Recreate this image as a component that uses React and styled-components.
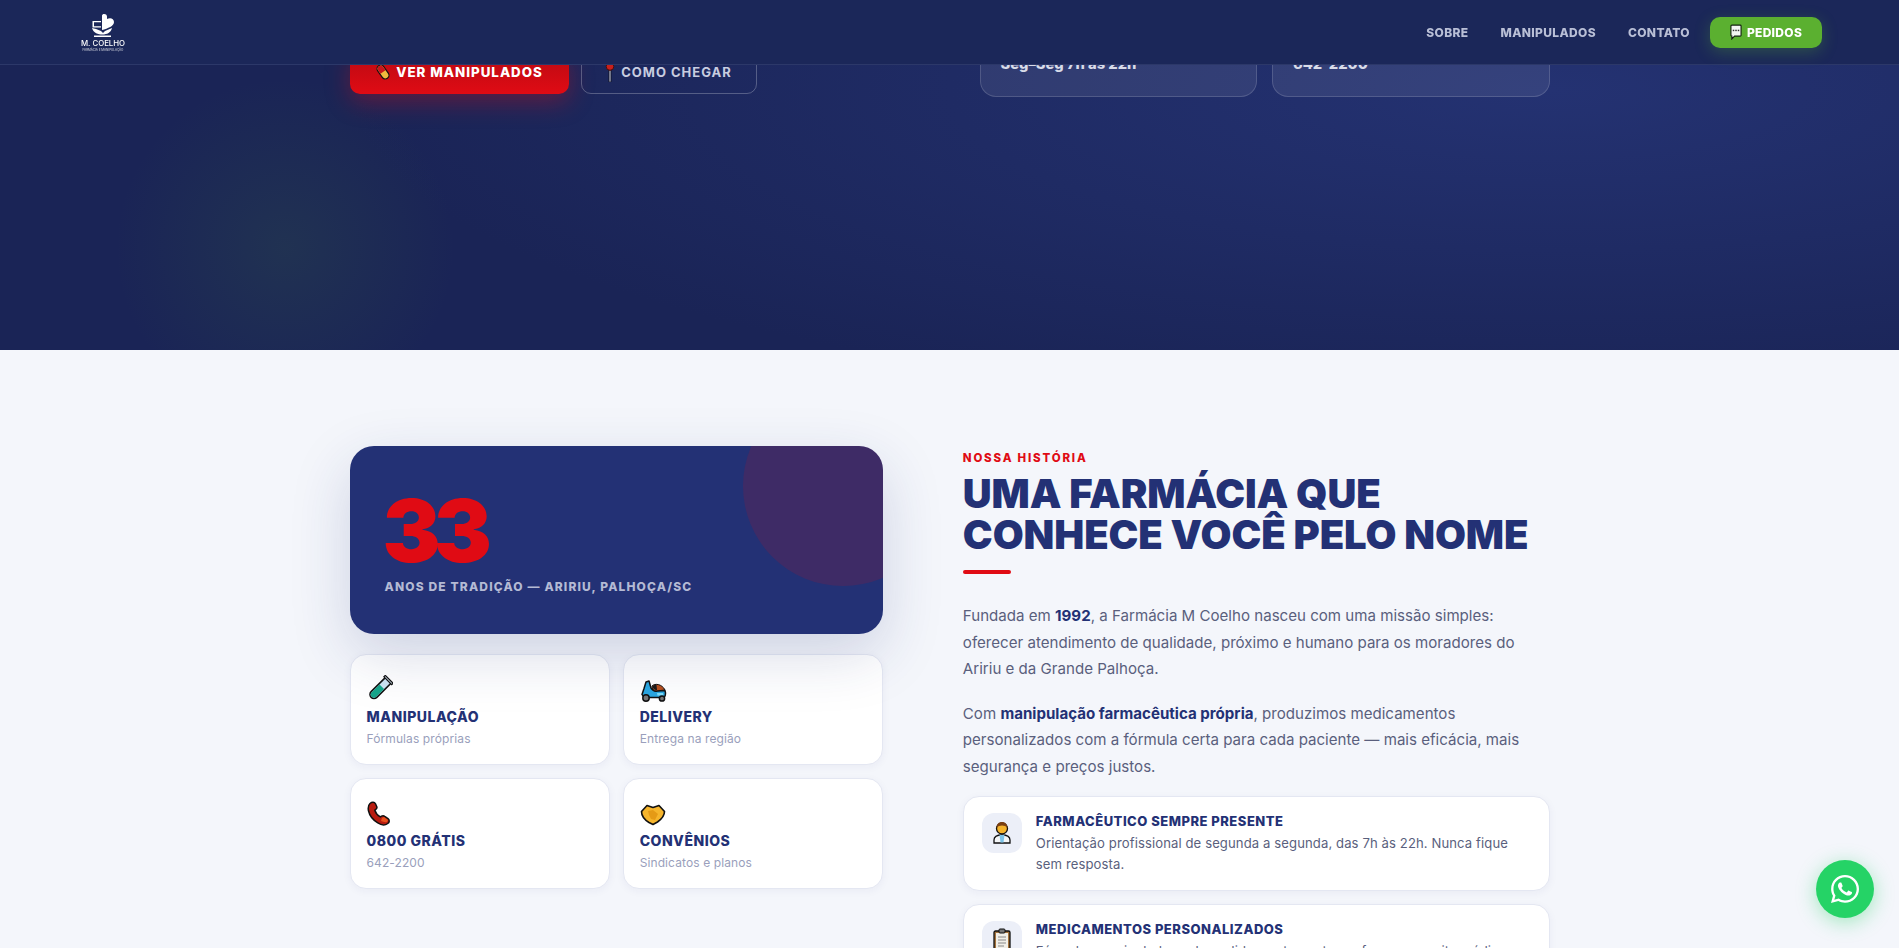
import styled, { createGlobalStyle } from "styled-components";
import { FaWhatsapp } from "react-icons/fa";

const GlobalStyle = createGlobalStyle`
  * {
    box-sizing: border-box;
  }
  html,
  body {
    margin: 0;
    height: 100%;
    overflow: hidden;
    background: #f4f6fb;
    font-family: Inter, "Open Sans", sans-serif;
  }
`;

const PillIcon = () => (
  <svg width="16" height="20" viewBox="0 0 24 24">
    <g transform="rotate(-35 12 12)">
      <rect x="6.5" y="0.5" width="11" height="23" rx="5.5" fill="#f1b93e" stroke="#1a1010" strokeWidth="1.8" />
      <path d="M7.4 12V6a4.6 4.6 0 0 1 9.2 0v6z" fill="#c8161c" />
    </g>
  </svg>
);

const PinIcon = () => (
  <svg width="10" height="20" viewBox="0 0 10 20">
    <rect x="4" y="8" width="2" height="12" fill="#aab0c8" stroke="#0c0c14" strokeWidth="0.7" />
    <circle cx="5" cy="4.500" r="3.800" fill="#c9201c" stroke="#4a0d0d" strokeWidth="1" />
  </svg>
);

const BalloonIcon = () => (
  <svg width="12" height="16" viewBox="0 0 13 17">
    <path d="M2 1h9a1 1 0 0 1 1 1v10a1 1 0 0 1-1 1H5l-3 3v-3a1 1 0 0 1-1-1V2a1 1 0 0 1 1-1z" fill="#f4f6f2" stroke="#10200c" strokeWidth="1.2" />
    <rect x="3" y="6" width="1.6" height="1.6" fill="#333" />
    <rect x="5.7" y="6" width="1.6" height="1.6" fill="#333" />
    <rect x="8.4" y="6" width="1.6" height="1.6" fill="#333" />
  </svg>
);

const TubeIcon = () => (
  <svg width="26" height="27" viewBox="0 0 26 27">
    <g transform="rotate(45 13 13.5)">
      <path d="M9 1h8v21a4 4 0 0 1-8 0z" fill="#cde4f3" stroke="#111" strokeWidth="1.6" />
      <path d="M9.8 11h6.4v11a3.2 3.2 0 0 1-6.4 0z" fill="#16a58a" />
      <rect x="7.5" y="0.5" width="11" height="2" fill="#dcebf5" stroke="#111" strokeWidth="1.2" />
    </g>
  </svg>
);

const ScooterIcon = () => (
  <svg width="27" height="22" viewBox="0 0 27 22">
    <path d="M6 2l3-1 2 7c2 3 4 3.500 6 3l8-.5c1 3 .5 7-2 7H9c-3 0-6-1-7-3l2-6z" fill="#2aa7e2" stroke="#111" strokeWidth="1.500" strokeLinejoin="round" />
    <path d="M12 6c3-3 10-2 13 4l-9 1c-2 0-4-2-4-5z" fill="#b8501f" stroke="#111" strokeWidth="1" />
    <path d="M12.500 6.500c1-1.500 3-2 4-1.500l.5 5c-2 .5-4-1.500-4.500-3.500z" fill="#1a1a1a" />
    <path d="M17 13h6l.5 2.500h-6z" fill="#7fdcf7" />
    <circle cx="6" cy="18" r="3.200" fill="#777" stroke="#111" strokeWidth="1.500" />
    <circle cx="22" cy="18.500" r="2.600" fill="#777" stroke="#111" strokeWidth="1.500" />
  </svg>
);

const PhoneIcon = () => (
  <svg width="25" height="25" viewBox="0 0 25 25">
    <path
      d="M3 2.500C5 .8 7.500 1 8.500 2.800l1.300 3c.4 1-.2 2-1 2.600l-1 .8c.7 2.300 2.600 5 5.500 6.600l1.200-.7c1-.5 2.300-.5 3.200.2l3.300 2.400c1.700 1.300 1.600 3.600-.2 4.800-2.600 1.800-6.500 1.700-10-.6C6 19 2.400 14 1.400 9.500 1 6.800 1.500 3.800 3 2.500z"
      fill="#b81c10"
      stroke="#111"
      strokeWidth="1.500"
    />
    <path d="M15 17l2-1 4 3-1 2c-2 .5-4 0-6-1z" fill="#e8501c" />
  </svg>
);

const HandshakeIcon = () => (
  <svg width="26" height="22" viewBox="0 0 26 22">
    <path
      d="M1.500 7.500L7 1.500l6 2 6-2 5.500 6c0 4-3.500 8-7 10.500L13 20.500 9 18.500C5 16 1.500 11.500 1.500 7.500z"
      fill="#f6b52c"
      stroke="#111"
      strokeWidth="1.600"
      strokeLinejoin="round"
    />
    <path d="M8 7l5-1 5 4-3 6-4-1-2-4z" fill="#e59a16" />
  </svg>
);

const DoctorIcon = () => (
  <svg width="18" height="23" viewBox="0 0 18 23">
    <path d="M1 22v-3c0-3 3-5 8-5s8 2 8 5v3z" fill="#f4f6f8" stroke="#111" strokeWidth="1.300" />
    <path d="M6.500 14h5l-1 7.500H7.500z" fill="#7cc3e8" />
    <circle cx="9" cy="7.500" r="5.500" fill="#f5b32b" stroke="#111" strokeWidth="1.300" />
    <path d="M3.600 7C3.500 3 6 1 9 1s5.500 2 5.400 6c-1.500-1.800-3-2.500-5.400-2.500S5 5.200 3.600 7z" fill="#7b3f12" />
  </svg>
);

const ClipboardIcon = () => (
  <svg width="18" height="25" viewBox="0 0 18 25">
    <rect x="1" y="3" width="16" height="21" rx="1.500" fill="#a5743d" stroke="#111" strokeWidth="1.300" />
    <rect x="3" y="5" width="12" height="17" fill="#f1efe8" />
    <path d="M5 9h8M5 12h8M5 15h8M5 18h6" stroke="#8a8a8a" strokeWidth="1.200" />
    <rect x="6" y="1" width="6" height="4" rx="1" fill="#777" stroke="#111" />
  </svg>
);

const LogoMark = () => (
  <svg width="24" height="24" viewBox="0 0 24 24" fill="#fff">
    <path d="M11 2.500C11 .3 16 .3 16 3.500V6c3-1.800 7-.8 7 3 0 4-6 6.500-12 8z" />
    <path d="M1.500 8h8.500v1.200H3v4h7v1.200H1.500z" />
    <path d="M1 15c1.500 5 6 6.500 10.500 6.500s8.500-2 9.500-6.500l-7 3-2 2-2-2-5-2z" />
    <rect x="3" y="22.500" width="17" height="1.500" />
  </svg>
);

const features = [
  { icon: <TubeIcon />, title: "MANIPULAÇÃO", text: "Fórmulas próprias" },
  { icon: <ScooterIcon />, title: "DELIVERY", text: "Entrega na região" },
  { icon: <PhoneIcon />, title: "0800 GRÁTIS", text: "642-2200" },
  { icon: <HandshakeIcon />, title: "CONVÊNIOS", text: "Sindicatos e planos" },
];

const App = () => {
  return (
    <Page>
      <GlobalStyle />
      <Nav>
        <Logo href="#">
          <LogoMark />
          <LogoName>M. COELHO</LogoName>
          <LogoTag>FARMÁCIA E MANIPULAÇÃO</LogoTag>
        </Logo>
        <NavLinks>
          <NavLink href="#">SOBRE</NavLink>
          <NavLink href="#">MANIPULADOS</NavLink>
          <NavLink href="#">CONTATO</NavLink>
          <OrderButton href="#">
            <BalloonIcon />
            PEDIDOS
          </OrderButton>
        </NavLinks>
      </Nav>

      <Hero>
        <HeroInner>
          <HeroActions>
            <PrimaryButton href="#">
              <PillIcon />
              VER MANIPULADOS
            </PrimaryButton>
            <GhostButton href="#">
              <PinIcon />
              COMO CHEGAR
            </GhostButton>
          </HeroActions>
          <HeroStats>
            <StatCard>Seg–Seg 7h às 22h</StatCard>
            <StatCard>642-2200</StatCard>
          </HeroStats>
        </HeroInner>
      </Hero>

      <About>
        <AboutInner>
          <div>
            <YearsCard>
              <YearsNumber>33</YearsNumber>
              <YearsLabel>ANOS DE TRADIÇÃO — ARIRIU, PALHOÇA/SC</YearsLabel>
            </YearsCard>
            <MiniGrid>
              {features.map((item) => (
                <MiniCard key={item.title}>
                  <MiniIcon>{item.icon}</MiniIcon>
                  <MiniTitle>{item.title}</MiniTitle>
                  <MiniText>{item.text}</MiniText>
                </MiniCard>
              ))}
            </MiniGrid>
          </div>

          <StoryColumn>
            <Eyebrow>NOSSA HISTÓRIA</Eyebrow>
            <Title>
              UMA FARMÁCIA QUE
              <br />
              CONHECE VOCÊ PELO NOME
            </Title>
            <RedBar />
            <Paragraph>
              Fundada em <strong>1992</strong>, a Farmácia M Coelho nasceu com uma missão simples:
              <br />
              oferecer atendimento de qualidade, próximo e humano para os moradores do
              <br />
              Aririu e da Grande Palhoça.
            </Paragraph>
            <Paragraph>
              Com <strong>manipulação farmacêutica própria</strong>, produzimos medicamentos
              <br />
              personalizados com a fórmula certa para cada paciente — mais eficácia, mais
              <br />
              segurança e preços justos.
            </Paragraph>
            <InfoCard>
              <InfoIcon>
                <DoctorIcon />
              </InfoIcon>
              <div>
                <InfoTitle>FARMACÊUTICO SEMPRE PRESENTE</InfoTitle>
                <InfoText>
                  Orientação profissional de segunda a segunda, das 7h às 22h. Nunca fique
                  <br />
                  sem resposta.
                </InfoText>
              </div>
            </InfoCard>
            <InfoCard>
              <InfoIcon>
                <ClipboardIcon />
              </InfoIcon>
              <div>
                <InfoTitle>MEDICAMENTOS PERSONALIZADOS</InfoTitle>
                <InfoText>
                  Fórmulas manipuladas sob medida, exatamente conforme a receita médica.
                </InfoText>
              </div>
            </InfoCard>
          </StoryColumn>
        </AboutInner>
      </About>

      <WhatsappButton href="#" aria-label="WhatsApp">
        <FaWhatsapp />
      </WhatsappButton>
    </Page>
  );
};

const Page = styled.div`
  height: 100vh;
  overflow: hidden;
`;

const Nav = styled.nav`
  position: fixed;
  top: 0;
  left: 0;
  right: 0;
  z-index: 10;
  height: 65px;
  padding: 0 77px 0 80px;
  display: flex;
  align-items: center;
  justify-content: space-between;
  background: #1b2759;
  border-bottom: 1px solid #2c3869;
`;

const Logo = styled.a`
  width: 46px;
  display: flex;
  flex-direction: column;
  align-items: center;
  color: #fff;
  text-decoration: none;
  white-space: nowrap;
`;

const LogoName = styled.span`
  margin-top: 2px;
  font-size: 7.8px;
  line-height: 9px;
  font-weight: 500;
`;

const LogoTag = styled.span`
  font-size: 3px;
  line-height: 4px;
  opacity: 0.8;
`;

const NavLinks = styled.div`
  display: flex;
  align-items: center;
  gap: 32px;
`;

const NavLink = styled.a`
  font-size: 12px;
  font-weight: 800;
  letter-spacing: 0.35px;
  color: #b9bfd6;
  text-decoration: none;
`;

const OrderButton = styled.a`
  width: 112px;
  height: 31px;
  margin-left: -12px;
  display: flex;
  align-items: center;
  justify-content: center;
  gap: 5px;
  font-size: 12px;
  font-weight: 800;
  letter-spacing: 0.3px;
  color: #fff;
  text-decoration: none;
  background: #5bb030;
  border-radius: 10px;
  box-shadow: 0 4px 16px rgba(91, 176, 48, 0.3);
`;

const Hero = styled.section`
  height: 350px;
  overflow: hidden;
  background:
    radial-gradient(circle 170px at 285px 248px, rgba(70, 130, 60, 0.15), rgba(70, 130, 60, 0) 100%),
    radial-gradient(ellipse 1200px 320px at 1550px 90px, #243272 0%, rgba(36, 50, 114, 0) 100%),
    #1a2456;
`;

const HeroInner = styled.div`
  width: 1200px;
  margin: 0 auto;
  display: grid;
  grid-template-columns: 1fr 1fr;
  column-gap: 60px;
`;

const HeroActions = styled.div`
  padding-top: 50px;
  display: flex;
  gap: 12px;
`;

const PrimaryButton = styled.a`
  width: 219px;
  height: 44px;
  display: flex;
  align-items: center;
  justify-content: center;
  gap: 5px;
  font-size: 13.3px;
  font-weight: 800;
  letter-spacing: 1px;
  color: #fff;
  text-decoration: none;
  background: linear-gradient(180deg, #b80a12, #e00b14);
  border-radius: 10px;
  box-shadow: 0 8px 24px rgba(224, 11, 20, 0.35);
`;

const GhostButton = styled.a`
  width: 176px;
  height: 44px;
  display: flex;
  align-items: center;
  justify-content: center;
  gap: 6px;
  font-size: 13px;
  font-weight: 700;
  letter-spacing: 1px;
  color: #c8cde0;
  text-decoration: none;
  border: 1px solid rgba(255, 255, 255, 0.25);
  border-radius: 10px;
`;

const HeroStats = styled.div`
  padding-top: 12px;
  display: grid;
  grid-template-columns: 1fr 1fr;
  gap: 15px;
`;

const StatCard = styled.div`
  height: 85px;
  padding: 42px 20px 0;
  font-size: 14.7px;
  line-height: 18px;
  font-weight: 800;
  color: #d8dbe8;
  background: rgba(255, 255, 255, 0.08);
  border: 1px solid rgba(255, 255, 255, 0.15);
  border-radius: 16px;
`;

const About = styled.section`
  padding: 96px 0;
  background: #f4f6fb;
`;

const AboutInner = styled.div`
  width: 1200px;
  margin: 0 auto;
  display: grid;
  grid-template-columns: 1fr 1.1fr;
  column-gap: 80px;
`;

const YearsCard = styled.div`
  position: relative;
  z-index: 1;
  height: 188px;
  padding: 41px 35px;
  overflow: hidden;
  background: #233175;
  border-radius: 24px;
  box-shadow: 0 20px 60px rgba(35, 49, 117, 0.18);

  &::before {
    content: "";
    position: absolute;
    top: -60px;
    right: -60px;
    width: 200px;
    height: 200px;
    border-radius: 50%;
    background: rgba(224, 11, 20, 0.15);
  }
`;

const YearsNumber = styled.div`
  margin-left: -2px;
  font-size: 87px;
  line-height: 87px;
  font-weight: 900;
  letter-spacing: -7px;
  color: #e00b14;
`;

const YearsLabel = styled.div`
  margin-top: 5px;
  font-size: 12px;
  line-height: 16px;
  font-weight: 800;
  letter-spacing: 1.15px;
  color: #b4bad4;
`;

const MiniGrid = styled.div`
  margin-top: 20px;
  display: grid;
  grid-template-columns: 1fr 1fr;
  gap: 13px;
`;

const MiniCard = styled.div`
  height: 111px;
  padding: 20px 16px 0;
  background: #fff;
  border: 1px solid #e4e7f2;
  border-radius: 16px;
  box-shadow: 0 2px 8px rgba(35, 49, 117, 0.05);
`;

const MiniIcon = styled.div`
  height: 27px;
  display: flex;
  align-items: flex-end;
`;

const MiniTitle = styled.div`
  margin-top: 6px;
  font-size: 14px;
  line-height: 18px;
  font-weight: 800;
  letter-spacing: 0.5px;
  color: #233175;
`;

const MiniText = styled.div`
  margin-top: 5px;
  font-size: 12px;
  line-height: 15px;
  letter-spacing: 0.1px;
  color: #9a9fbc;
`;

const StoryColumn = styled.div`
  padding-top: 5px;
`;

const Eyebrow = styled.div`
  font-size: 11.5px;
  line-height: 14px;
  font-weight: 800;
  letter-spacing: 1.8px;
  color: #e00b14;
`;

const Title = styled.h2`
  margin: 8px 0 0;
  font-size: 40px;
  line-height: 41px;
  font-weight: 900;
  letter-spacing: -0.1px;
  color: #233175;
`;

const RedBar = styled.div`
  width: 48px;
  height: 4px;
  margin: 14.5px 0 29.5px;
  background: #e00b14;
  border-radius: 2px;
`;

const Paragraph = styled.p`
  margin: 0 0 18px;
  font-size: 15.1px;
  line-height: 26.6px;
  color: #5a5f7d;
  white-space: nowrap;

  &:last-of-type {
    margin-bottom: 15px;
  }

  strong {
    font-weight: 700;
    color: #233175;
  }
`;

const InfoCard = styled.div`
  margin-bottom: 13px;
  padding: 16px 18px 15px;
  display: flex;
  gap: 14px;
  background: #fff;
  border: 1px solid #e4e7f2;
  border-radius: 16px;
  box-shadow: 0 2px 8px rgba(35, 49, 117, 0.05);
`;

const InfoIcon = styled.div`
  flex: none;
  width: 40px;
  height: 40px;
  display: flex;
  align-items: center;
  justify-content: center;
  background: #eceff8;
  border-radius: 12px;
`;

const InfoTitle = styled.div`
  font-size: 13px;
  line-height: 17px;
  font-weight: 800;
  letter-spacing: 0.5px;
  color: #233175;
`;

const InfoText = styled.div`
  margin-top: 3px;
  font-size: 13.1px;
  line-height: 21px;
  letter-spacing: 0.1px;
  color: #5a5f7d;
  white-space: nowrap;
`;

const WhatsappButton = styled.a`
  position: fixed;
  right: 25px;
  bottom: 30px;
  z-index: 10;
  width: 58px;
  height: 58px;
  display: flex;
  align-items: center;
  justify-content: center;
  font-size: 32px;
  color: #fff;
  background: #25d366;
  border-radius: 50%;
  box-shadow: 0 4px 20px rgba(37, 211, 102, 0.4);
`;

export default App;
